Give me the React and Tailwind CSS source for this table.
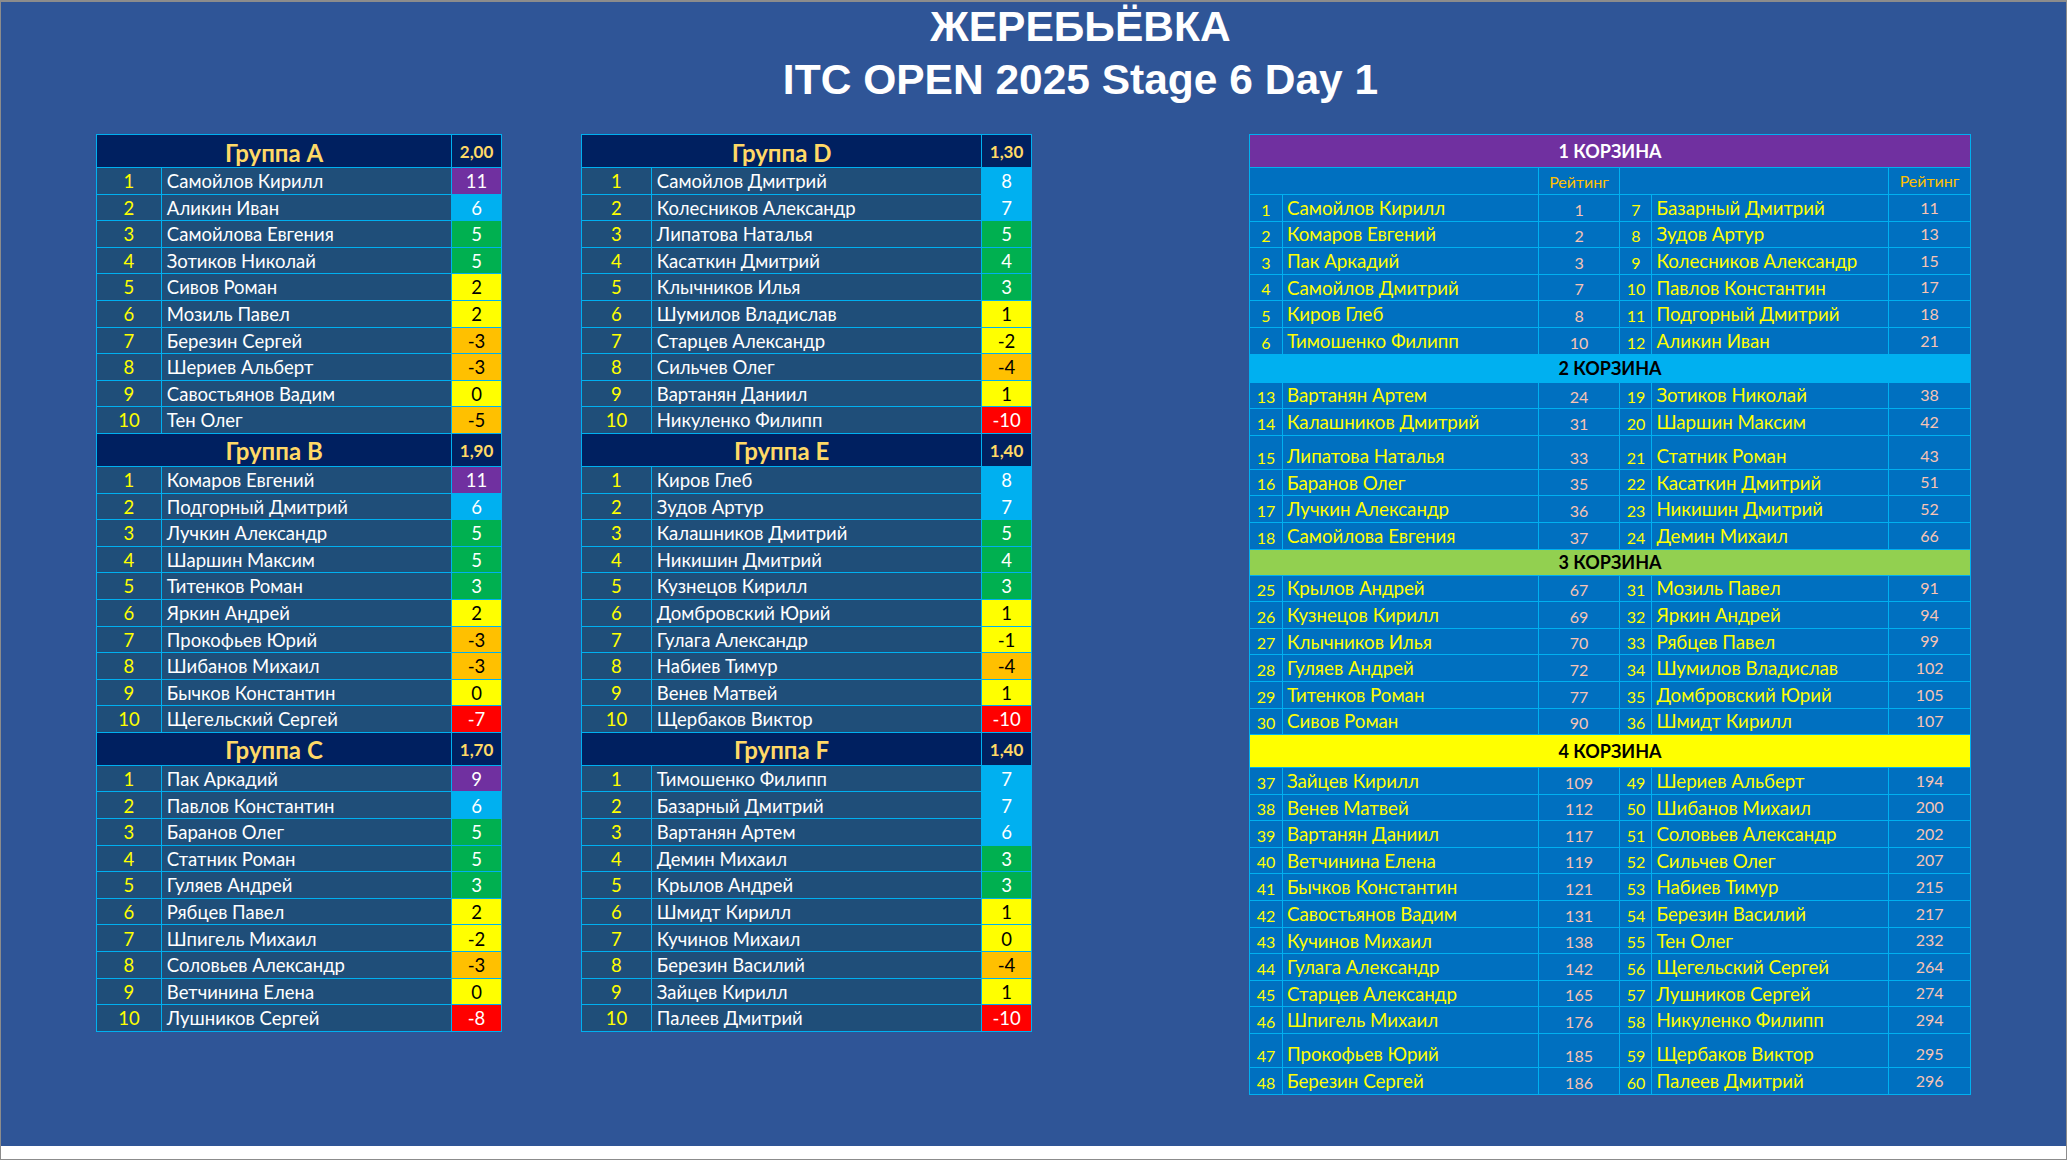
import React from "react";

const scoreStyles = {
  p: "bg-[#7030a0] text-white",
  b: "bg-[#00b0f0] text-white",
  g: "bg-[#00b050] text-white",
  y: "bg-[#ffff00] text-black",
  o: "bg-[#ffc000] text-black",
  r: "bg-[#ff0000] text-white",
};

const groups = {
  A: {
    coef: "2,00",
    rows: [
      ["Самойлов Кирилл", "11", "p"],
      ["Аликин Иван", "6", "b"],
      ["Самойлова Евгения", "5", "g"],
      ["Зотиков Николай", "5", "g"],
      ["Сивов Роман", "2", "y"],
      ["Мозиль Павел", "2", "y"],
      ["Березин Сергей", "-3", "o"],
      ["Шериев Альберт", "-3", "o"],
      ["Савостьянов Вадим", "0", "y"],
      ["Тен Олег", "-5", "o"],
    ],
  },
  B: {
    coef: "1,90",
    rows: [
      ["Комаров Евгений", "11", "p"],
      ["Подгорный Дмитрий", "6", "b"],
      ["Лучкин Александр", "5", "g"],
      ["Шаршин Максим", "5", "g"],
      ["Титенков Роман", "3", "g"],
      ["Яркин Андрей", "2", "y"],
      ["Прокофьев Юрий", "-3", "o"],
      ["Шибанов Михаил", "-3", "o"],
      ["Бычков Константин", "0", "y"],
      ["Щегельский Сергей", "-7", "r"],
    ],
  },
  C: {
    coef: "1,70",
    rows: [
      ["Пак Аркадий", "9", "p"],
      ["Павлов Константин", "6", "b"],
      ["Баранов Олег", "5", "g"],
      ["Статник Роман", "5", "g"],
      ["Гуляев Андрей", "3", "g"],
      ["Рябцев Павел", "2", "y"],
      ["Шпигель Михаил", "-2", "y"],
      ["Соловьев Александр", "-3", "o"],
      ["Ветчинина Елена", "0", "y"],
      ["Лушников Сергей", "-8", "r"],
    ],
  },
  D: {
    coef: "1,30",
    rows: [
      ["Самойлов Дмитрий", "8", "b"],
      ["Колесников Александр", "7", "b"],
      ["Липатова Наталья", "5", "g"],
      ["Касаткин Дмитрий", "4", "g"],
      ["Клычников Илья", "3", "g"],
      ["Шумилов Владислав", "1", "y"],
      ["Старцев Александр", "-2", "y"],
      ["Сильчев Олег", "-4", "o"],
      ["Вартанян Даниил", "1", "y"],
      ["Никуленко Филипп", "-10", "r"],
    ],
  },
  E: {
    coef: "1,40",
    rows: [
      ["Киров Глеб", "8", "b"],
      ["Зудов Артур", "7", "b"],
      ["Калашников Дмитрий", "5", "g"],
      ["Никишин Дмитрий", "4", "g"],
      ["Кузнецов Кирилл", "3", "g"],
      ["Домбровский Юрий", "1", "y"],
      ["Гулага Александр", "-1", "y"],
      ["Набиев Тимур", "-4", "o"],
      ["Венев Матвей", "1", "y"],
      ["Щербаков Виктор", "-10", "r"],
    ],
  },
  F: {
    coef: "1,40",
    rows: [
      ["Тимошенко Филипп", "7", "b"],
      ["Базарный Дмитрий", "7", "b"],
      ["Вартанян Артем", "6", "b"],
      ["Демин Михаил", "3", "g"],
      ["Крылов Андрей", "3", "g"],
      ["Шмидт Кирилл", "1", "y"],
      ["Кучинов Михаил", "0", "y"],
      ["Березин Василий", "-4", "o"],
      ["Зайцев Кирилл", "1", "y"],
      ["Палеев Дмитрий", "-10", "r"],
    ],
  },
};

// корзины: [num, name, rating, num2, name2, rating2, tall?]
const baskets = [
  {
    title: "1 КОРЗИНА",
    head: "bg-[#7030a0] text-white h-[33px]",
    rows: [
      [1, "Самойлов Кирилл", 1, 7, "Базарный Дмитрий", 11],
      [2, "Комаров Евгений", 2, 8, "Зудов Артур", 13],
      [3, "Пак Аркадий", 3, 9, "Колесников Александр", 15],
      [4, "Самойлов Дмитрий", 7, 10, "Павлов Константин", 17],
      [5, "Киров Глеб", 8, 11, "Подгорный Дмитрий", 18],
      [6, "Тимошенко Филипп", 10, 12, "Аликин Иван", 21],
    ],
  },
  {
    title: "2 КОРЗИНА",
    head: "bg-[#00b0f0] text-black h-[28px]",
    rows: [
      [13, "Вартанян Артем", 24, 19, "Зотиков Николай", 38],
      [14, "Калашников Дмитрий", 31, 20, "Шаршин Максим", 42],
      [15, "Липатова Наталья", 33, 21, "Статник Роман", 43, true],
      [16, "Баранов Олег", 35, 22, "Касаткин Дмитрий", 51],
      [17, "Лучкин Александр", 36, 23, "Никишин Дмитрий", 52],
      [18, "Самойлова Евгения", 37, 24, "Демин Михаил", 66],
    ],
  },
  {
    title: "3 КОРЗИНА",
    head: "bg-[#92d050] text-black h-[26px]",
    rows: [
      [25, "Крылов Андрей", 67, 31, "Мозиль Павел", 91],
      [26, "Кузнецов Кирилл", 69, 32, "Яркин Андрей", 94],
      [27, "Клычников Илья", 70, 33, "Рябцев Павел", 99],
      [28, "Гуляев Андрей", 72, 34, "Шумилов Владислав", 102],
      [29, "Титенков Роман", 77, 35, "Домбровский Юрий", 105],
      [30, "Сивов Роман", 90, 36, "Шмидт Кирилл", 107],
    ],
  },
  {
    title: "4 КОРЗИНА",
    head: "bg-[#ffff00] text-black h-[33px]",
    rows: [
      [37, "Зайцев Кирилл", 109, 49, "Шериев Альберт", 194],
      [38, "Венев Матвей", 112, 50, "Шибанов Михаил", 200],
      [39, "Вартанян Даниил", 117, 51, "Соловьев Александр", 202],
      [40, "Ветчинина Елена", 119, 52, "Сильчев Олег", 207],
      [41, "Бычков Константин", 121, 53, "Набиев Тимур", 215],
      [42, "Савостьянов Вадим", 131, 54, "Березин Василий", 217],
      [43, "Кучинов Михаил", 138, 55, "Тен Олег", 232],
      [44, "Гулага Александр", 142, 56, "Щегельский Сергей", 264],
      [45, "Старцев Александр", 165, 57, "Лушников Сергей", 274],
      [46, "Шпигель Михаил", 176, 58, "Никуленко Филипп", 294],
      [47, "Прокофьев Юрий", 185, 59, "Щербаков Виктор", 295, true],
      [48, "Березин Сергей", 186, 60, "Палеев Дмитрий", 296],
    ],
  },
];

const cell = "border-r border-b border-[#00b0f0] flex items-end pb-[3px] leading-none";

const GroupTable = ({ letter, wide }) => {
  const g = groups[letter];
  const numW = wide ? "w-[70px]" : "w-[65px]";
  const nameW = wide ? "w-[331px]" : "w-[291px]";
  const headW = wide ? "w-[401px]" : "w-[356px]";
  return (
    <div className="flex flex-col">
      <div className="flex h-[33px] bg-[#002060] text-[#ffd966] font-bold">
        <div className={`${headW} border-r border-b border-[#00b0f0] flex items-center justify-center text-[24px] pt-[3px]`}>
          Группа {letter}
        </div>
        <div className="w-[50px] border-r border-b border-[#00b0f0] flex items-center justify-center text-[17px] pt-[1px]">
          {g.coef}
        </div>
      </div>
      {g.rows.map(([name, score, c], i) => (
        <div key={name} className="flex h-[26.6px] bg-[#1f4e79] text-[18.5px]">
          <div className={`${numW} ${cell} justify-center text-[#ffff00]`}>{i + 1}</div>
          <div className={`${nameW} ${cell} pl-[5px] text-white`}>{name}</div>
          <div className={`w-[50px] ${cell} justify-center ${scoreStyles[c]}`}>{score}</div>
        </div>
      ))}
    </div>
  );
};

const BasketRow = ({ r }) => {
  const [n1, name1, r1, n2, name2, r2, tall] = r;
  return (
    <div className={`flex ${tall ? "h-[34px]" : "h-[26.6px]"} bg-[#0070c0]`}>
      <div className={`w-[33px] ${cell} justify-center text-[#ffff00] text-[16px]`}>{n1}</div>
      <div className={`w-[256px] ${cell} pl-[4px] text-[#ffff00] text-[18.7px]`}>{name1}</div>
      <div className={`w-[82px] ${cell} justify-center text-[#f8c4b4] text-[16px]`}>{r1}</div>
      <div className={`w-[32px] ${cell} justify-center text-[#ffff00] text-[16px]`}>{n2}</div>
      <div className={`w-[237px] ${cell} pl-[4px] text-[#ffff00] text-[18.7px]`}>{name2}</div>
      <div className={`w-[82px] ${cell} justify-center text-[#f8c4b4] text-[16px] pb-[5px]`}>{r2}</div>
    </div>
  );
};

const BasketTable = () => (
  <div className="flex flex-col w-[722px] border-l border-t border-[#00b0f0]">
    {baskets.map((b, bi) => (
      <React.Fragment key={b.title}>
        <div className={`${b.head} border-r border-b border-[#00b0f0] flex items-center justify-center font-bold text-[18px] pt-[1px]`}>
          {b.title}
        </div>
        {bi === 0 && (
          <div className="flex h-[27px] bg-[#0070c0] text-[#ffc000] text-[16px]">
            <div className={`w-[289px] ${cell}`}></div>
            <div className={`w-[82px] ${cell} justify-center pb-[4px]`}>Рейтинг</div>
            <div className={`w-[269px] ${cell}`}></div>
            <div className={`w-[82px] ${cell} justify-center pb-[5px]`}>Рейтинг</div>
          </div>
        )}
        {b.rows.map((r) => (
          <BasketRow key={r[0]} r={r} />
        ))}
      </React.Fragment>
    ))}
  </div>
);

export default function App() {
  return (
    <div className="w-[2067px] h-[1160px] bg-white border-t-2 border-l border-r border-b border-[#8c8c8c] overflow-hidden">
      <div className="h-[1144px] bg-[#2f5597] font-['Lato',sans-serif]">
        <div className="pl-[94px] text-white font-bold text-[42.5px] text-center font-['Liberation_Sans',Arial,sans-serif]">
          <div className="h-[50px] leading-[50px]">ЖЕРЕБЬЁВКА</div>
          <div className="h-[56px] leading-[56px]">ITC OPEN 2025 Stage 6 Day 1</div>
        </div>
        <div className="flex items-start mt-[26px] pl-[95px]">
          <div className="flex flex-col w-[406px] border-l border-t border-[#00b0f0]">
            <GroupTable letter="A" />
            <GroupTable letter="B" />
            <GroupTable letter="C" />
          </div>
          <div className="flex flex-col w-[451px] ml-[79px] border-l border-t border-[#00b0f0]">
            <GroupTable letter="D" wide />
            <GroupTable letter="E" wide />
            <GroupTable letter="F" wide />
          </div>
          <div className="ml-[217px]">
            <BasketTable />
          </div>
        </div>
      </div>
    </div>
  );
}
